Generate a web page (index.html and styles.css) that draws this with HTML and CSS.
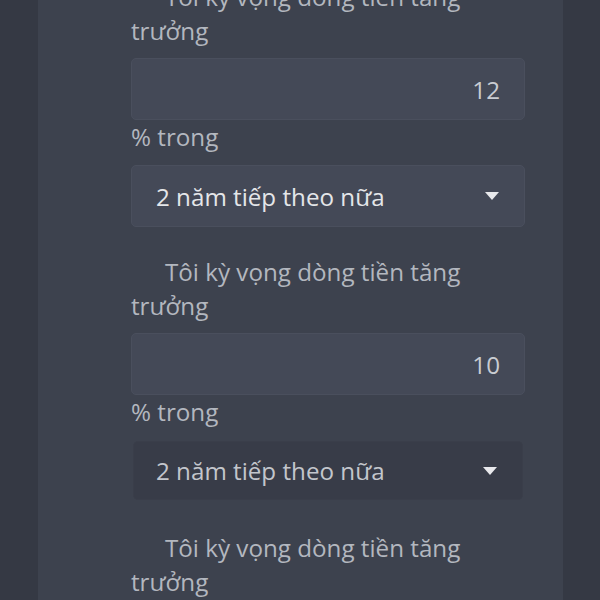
FILE: index.html
```html
<!DOCTYPE html>
<html lang="vi">

<head>
    <meta charset="UTF-8">
    <meta name="viewport" content="width=device-width, initial-scale=1.0">
    <title>Dòng tiền</title>
    <link rel="stylesheet" href="styles.css">
</head>

<body>
    <div class="page">
        <div class="panel">
            <div class="form">
                <div class="step">
                    <p class="label">Tôi kỳ vọng dòng tiền tăng trưởng</p>
                    <div class="field num">12</div>
                    <p class="unit">% trong</p>
                    <div class="field pick">
                        <span>2 năm tiếp theo nữa</span>
                        <svg class="caret" width="14" height="8" viewBox="0 0 14 8"><path d="M0 0h14L7 8z" fill="#e8e9ec"/></svg>
                    </div>
                </div>
                <div class="step">
                    <p class="label">Tôi kỳ vọng dòng tiền tăng trưởng</p>
                    <div class="field num">10</div>
                    <p class="unit">% trong</p>
                    <div class="field pick dim">
                        <span>2 năm tiếp theo nữa</span>
                        <svg class="caret" width="14" height="8" viewBox="0 0 14 8"><path d="M0 0h14L7 8z" fill="#e8e9ec"/></svg>
                    </div>
                </div>
                <div class="step">
                    <p class="label">Tôi kỳ vọng dòng tiền tăng trưởng</p>
                </div>
            </div>
        </div>
    </div>
</body>

</html>
```

FILE: styles.css
```css
* {
    padding: 0;
    margin: 0;
    box-sizing: border-box;
}

html,
body {
    height: 100%;
    overflow: hidden;
}

body {
    background: #353944;
    font-family: "Open Sans", "Noto Sans", sans-serif;
    font-size: 24.2px;
}

.page {
    display: flex;
    height: 100%;
    padding: 0 37px 0 38px;
}

.panel {
    flex: 1;
    background: #3d424e;
    padding: 0 38px 0 93px;
}

.form {
    margin-top: -20px;
}

.step {
    display: flex;
    flex-direction: column;
}

.label {
    color: #b3b7bf;
    line-height: 34px;
    text-indent: 34px;
    padding-right: 40px;
}

.unit {
    color: #b3b7bf;
    line-height: 34px;
}

.field {
    height: 62px;
    background: #444957;
    border: 1px solid #4a4f5d;
    border-radius: 5px;
    display: flex;
    align-items: center;
    padding: 0 24px;
}

.num {
    margin-top: 10px;
    justify-content: flex-end;
    color: #c9ccd2;
}

.pick {
    margin: 11px 0 28px;
    justify-content: space-between;
    color: #e4e6e9;
}

.pick.dim {
    background: #383c48;
    border-color: #3a3e4a;
    height: 59px;
    margin: 12px 2px 31px;
    padding: 0 24px 0 22px;
    color: #c3c6cc;
}

.caret {
    margin-right: 1px;
}
```
